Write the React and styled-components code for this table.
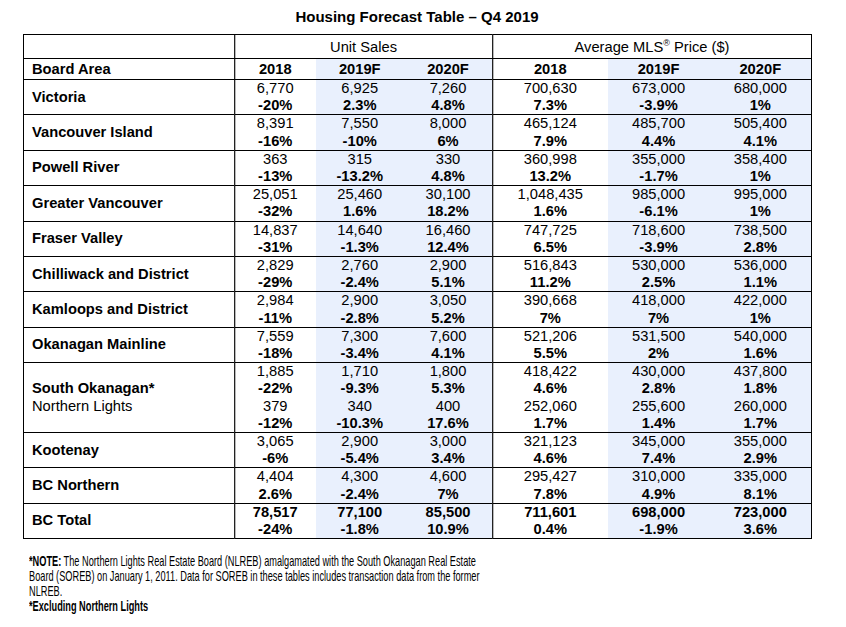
import React from "react";
import styled, { createGlobalStyle } from "styled-components";

const GlobalStyle = createGlobalStyle`
  body {
    margin: 0;
    background: #ffffff;
    font-family: "Liberation Sans", Arial, sans-serif;
    color: #000000;
  }
`;

const rows = [
  { label: [["Victoria", true]], cells: [[["6,770", "-20%"]], [["6,925", "2.3%"]], [["7,260", "4.8%"]], [["700,630", "7.3%"]], [["673,000", "-3.9%"]], [["680,000", "1%"]]] },
  { label: [["Vancouver Island", true]], cells: [[["8,391", "-16%"]], [["7,550", "-10%"]], [["8,000", "6%"]], [["465,124", "7.9%"]], [["485,700", "4.4%"]], [["505,400", "4.1%"]]] },
  { label: [["Powell River", true]], cells: [[["363", "-13%"]], [["315", "-13.2%"]], [["330", "4.8%"]], [["360,998", "13.2%"]], [["355,000", "-1.7%"]], [["358,400", "1%"]]] },
  { label: [["Greater Vancouver", true]], cells: [[["25,051", "-32%"]], [["25,460", "1.6%"]], [["30,100", "18.2%"]], [["1,048,435", "1.6%"]], [["985,000", "-6.1%"]], [["995,000", "1%"]]] },
  { label: [["Fraser Valley", true]], cells: [[["14,837", "-31%"]], [["14,640", "-1.3%"]], [["16,460", "12.4%"]], [["747,725", "6.5%"]], [["718,600", "-3.9%"]], [["738,500", "2.8%"]]] },
  { label: [["Chilliwack and District", true]], cells: [[["2,829", "-29%"]], [["2,760", "-2.4%"]], [["2,900", "5.1%"]], [["516,843", "11.2%"]], [["530,000", "2.5%"]], [["536,000", "1.1%"]]] },
  { label: [["Kamloops and District", true]], cells: [[["2,984", "-11%"]], [["2,900", "-2.8%"]], [["3,050", "5.2%"]], [["390,668", "7%"]], [["418,000", "7%"]], [["422,000", "1%"]]] },
  { label: [["Okanagan Mainline", true]], cells: [[["7,559", "-18%"]], [["7,300", "-3.4%"]], [["7,600", "4.1%"]], [["521,206", "5.5%"]], [["531,500", "2%"]], [["540,000", "1.6%"]]] },
  {
    label: [["South Okanagan*", true], ["Northern Lights", false]],
    cells: [
      [["1,885", "-22%"], ["379", "-12%"]],
      [["1,710", "-9.3%"], ["340", "-10.3%"]],
      [["1,800", "5.3%"], ["400", "17.6%"]],
      [["418,422", "4.6%"], ["252,060", "1.7%"]],
      [["430,000", "2.8%"], ["255,600", "1.4%"]],
      [["437,800", "1.8%"], ["260,000", "1.7%"]],
    ],
  },
  { label: [["Kootenay", true]], cells: [[["3,065", "-6%"]], [["2,900", "-5.4%"]], [["3,000", "3.4%"]], [["321,123", "4.6%"]], [["345,000", "7.4%"]], [["355,000", "2.9%"]]] },
  { label: [["BC Northern", true]], cells: [[["4,404", "2.6%"]], [["4,300", "-2.4%"]], [["4,600", "7%"]], [["295,427", "7.8%"]], [["310,000", "4.9%"]], [["335,000", "8.1%"]]] },
  { label: [["BC Total", true]], total: true, cells: [[["78,517", "-24%"]], [["77,100", "-1.8%"]], [["85,500", "10.9%"]], [["711,601", "0.4%"]], [["698,000", "-1.9%"]], [["723,000", "3.6%"]]] },
];

const years = ["2018", "2019F", "2020F", "2018", "2019F", "2020F"];
// shaded forecast columns, and the columns that open a group
const shaded = [false, true, true, false, true, true];
const groupStart = [true, false, false, true, false, false];

const App = () => {
  return (
    <Page>
      <GlobalStyle />
      <Title>Housing Forecast Table – Q4 2019</Title>
      <Table>
        <colgroup>
          <col style={{ width: 211 }} />
          <col style={{ width: 81 }} />
          <col style={{ width: 88.5 }} />
          <col style={{ width: 88.5 }} />
          <col style={{ width: 115 }} />
          <col style={{ width: 102 }} />
          <col style={{ width: 102 }} />
        </colgroup>
        <thead>
          <GroupRow>
            <LabelHead />
            <GroupHead colSpan={3}>Unit Sales</GroupHead>
            <GroupHead colSpan={3}>
              Average MLS<Sup>®</Sup> Price ($)
            </GroupHead>
          </GroupRow>
          <YearRow>
            <LabelHead>Board Area</LabelHead>
            {years.map((y, i) => (
              <YearHead key={i} $shaded={shaded[i]} $start={groupStart[i]}>
                {y}
              </YearHead>
            ))}
          </YearRow>
        </thead>
        <tbody>
          {rows.map((row) => (
            <DataRow key={row.label[0][0]}>
              <LabelCell>
                {row.label.map(([text, bold]) => (
                  <LabelLine key={text} $bold={bold}>
                    {text}
                  </LabelLine>
                ))}
              </LabelCell>
              {row.cells.map((pairs, i) => (
                <ValueCell key={i} $shaded={shaded[i]} $start={groupStart[i]}>
                  {pairs.map(([num, pct]) => (
                    <React.Fragment key={num}>
                      <Num $bold={row.total}>{num}</Num>
                      <Pct>{pct}</Pct>
                    </React.Fragment>
                  ))}
                </ValueCell>
              ))}
            </DataRow>
          ))}
        </tbody>
      </Table>
      <Note>
        <NoteLead>*NOTE:</NoteLead> The Northern Lights Real Estate Board (NLREB) amalgamated with the South Okanagan
        Real Estate
        <br />
        Board (SOREB) on January 1, 2011. Data for SOREB in these tables includes transaction data from the former
        <br />
        NLREB.
        <NoteBold>*Excluding Northern Lights</NoteBold>
      </Note>
    </Page>
  );
};

export default App;

const Page = styled.div`
  width: 846px;
  height: 627px;
  padding: 9px 0 0 23px;
  box-sizing: border-box;
  overflow: hidden;
`;

const Title = styled.div`
  width: 788px;
  text-align: center;
  font-size: 15px;
  font-weight: 700;
  line-height: 16px;
  margin-bottom: 9px;
`;

const Table = styled.table`
  width: 788px;
  table-layout: fixed;
  border-collapse: collapse;
  border: 1px solid #000;
  font-size: 14.7px;
`;

const GroupRow = styled.tr`
  height: 24px;
`;

const YearRow = styled.tr`
  height: 21px;
`;

const DataRow = styled.tr`
  border-top: 1px solid #000;
`;

const LabelHead = styled.th`
  border-top: 1px solid #000;
  border-bottom: 1px solid #000;
  padding: 0 0 0 8px;
  text-align: left;
  font-weight: 700;
  line-height: 18px;
`;

const GroupHead = styled.th`
  border-left: 1px solid #222;
  box-shadow: inset 1px 0 0 #b8b8b8;
  border-bottom: 1px solid #000;
  font-weight: 400;
  line-height: 18px;
  padding: 1px 0 0;
`;

const Sup = styled.sup`
  font-size: 9px;
  line-height: 0;
`;

const YearHead = styled.th`
  background: ${(p) => (p.$shaded ? "#e9f0fd" : "#ffffff")};
  border-left: ${(p) => (p.$start ? "1px solid #222" : "none")};
  box-shadow: ${(p) => (p.$start ? "inset 1px 0 0 #b8b8b8" : "none")};
  font-weight: 700;
  line-height: 18px;
  padding: 0;
`;

const LabelCell = styled.td`
  height: 34.2px;
  padding: 0 0 0 8px;
  vertical-align: middle;
`;

const LabelLine = styled.div`
  font-weight: ${(p) => (p.$bold ? 700 : 400)};
  line-height: 17.4px;
`;

const ValueCell = styled.td`
  background: ${(p) => (p.$shaded ? "#e9f0fd" : "#ffffff")};
  border-left: ${(p) => (p.$start ? "1px solid #222" : "none")};
  box-shadow: ${(p) => (p.$start ? "inset 1px 0 0 #b8b8b8" : "none")};
  text-align: center;
  vertical-align: middle;
  padding: 0;
`;

const Num = styled.div`
  font-weight: ${(p) => (p.$bold ? 700 : 400)};
  line-height: 17.2px;
`;

const Pct = styled.div`
  font-weight: 700;
  line-height: 17.2px;
`;

/* the note is set in a narrow face; squeeze the regular face to match */
const Note = styled.div`
  width: 720px;
  margin: 15px 0 0 6px;
  font-size: 14.8px;
  line-height: 15px;
  white-space: nowrap;
  transform: scaleX(0.622);
  transform-origin: left top;
`;

const NoteLead = styled.span`
  font-weight: 700;
`;

const NoteBold = styled.div`
  font-weight: 700;
`;
